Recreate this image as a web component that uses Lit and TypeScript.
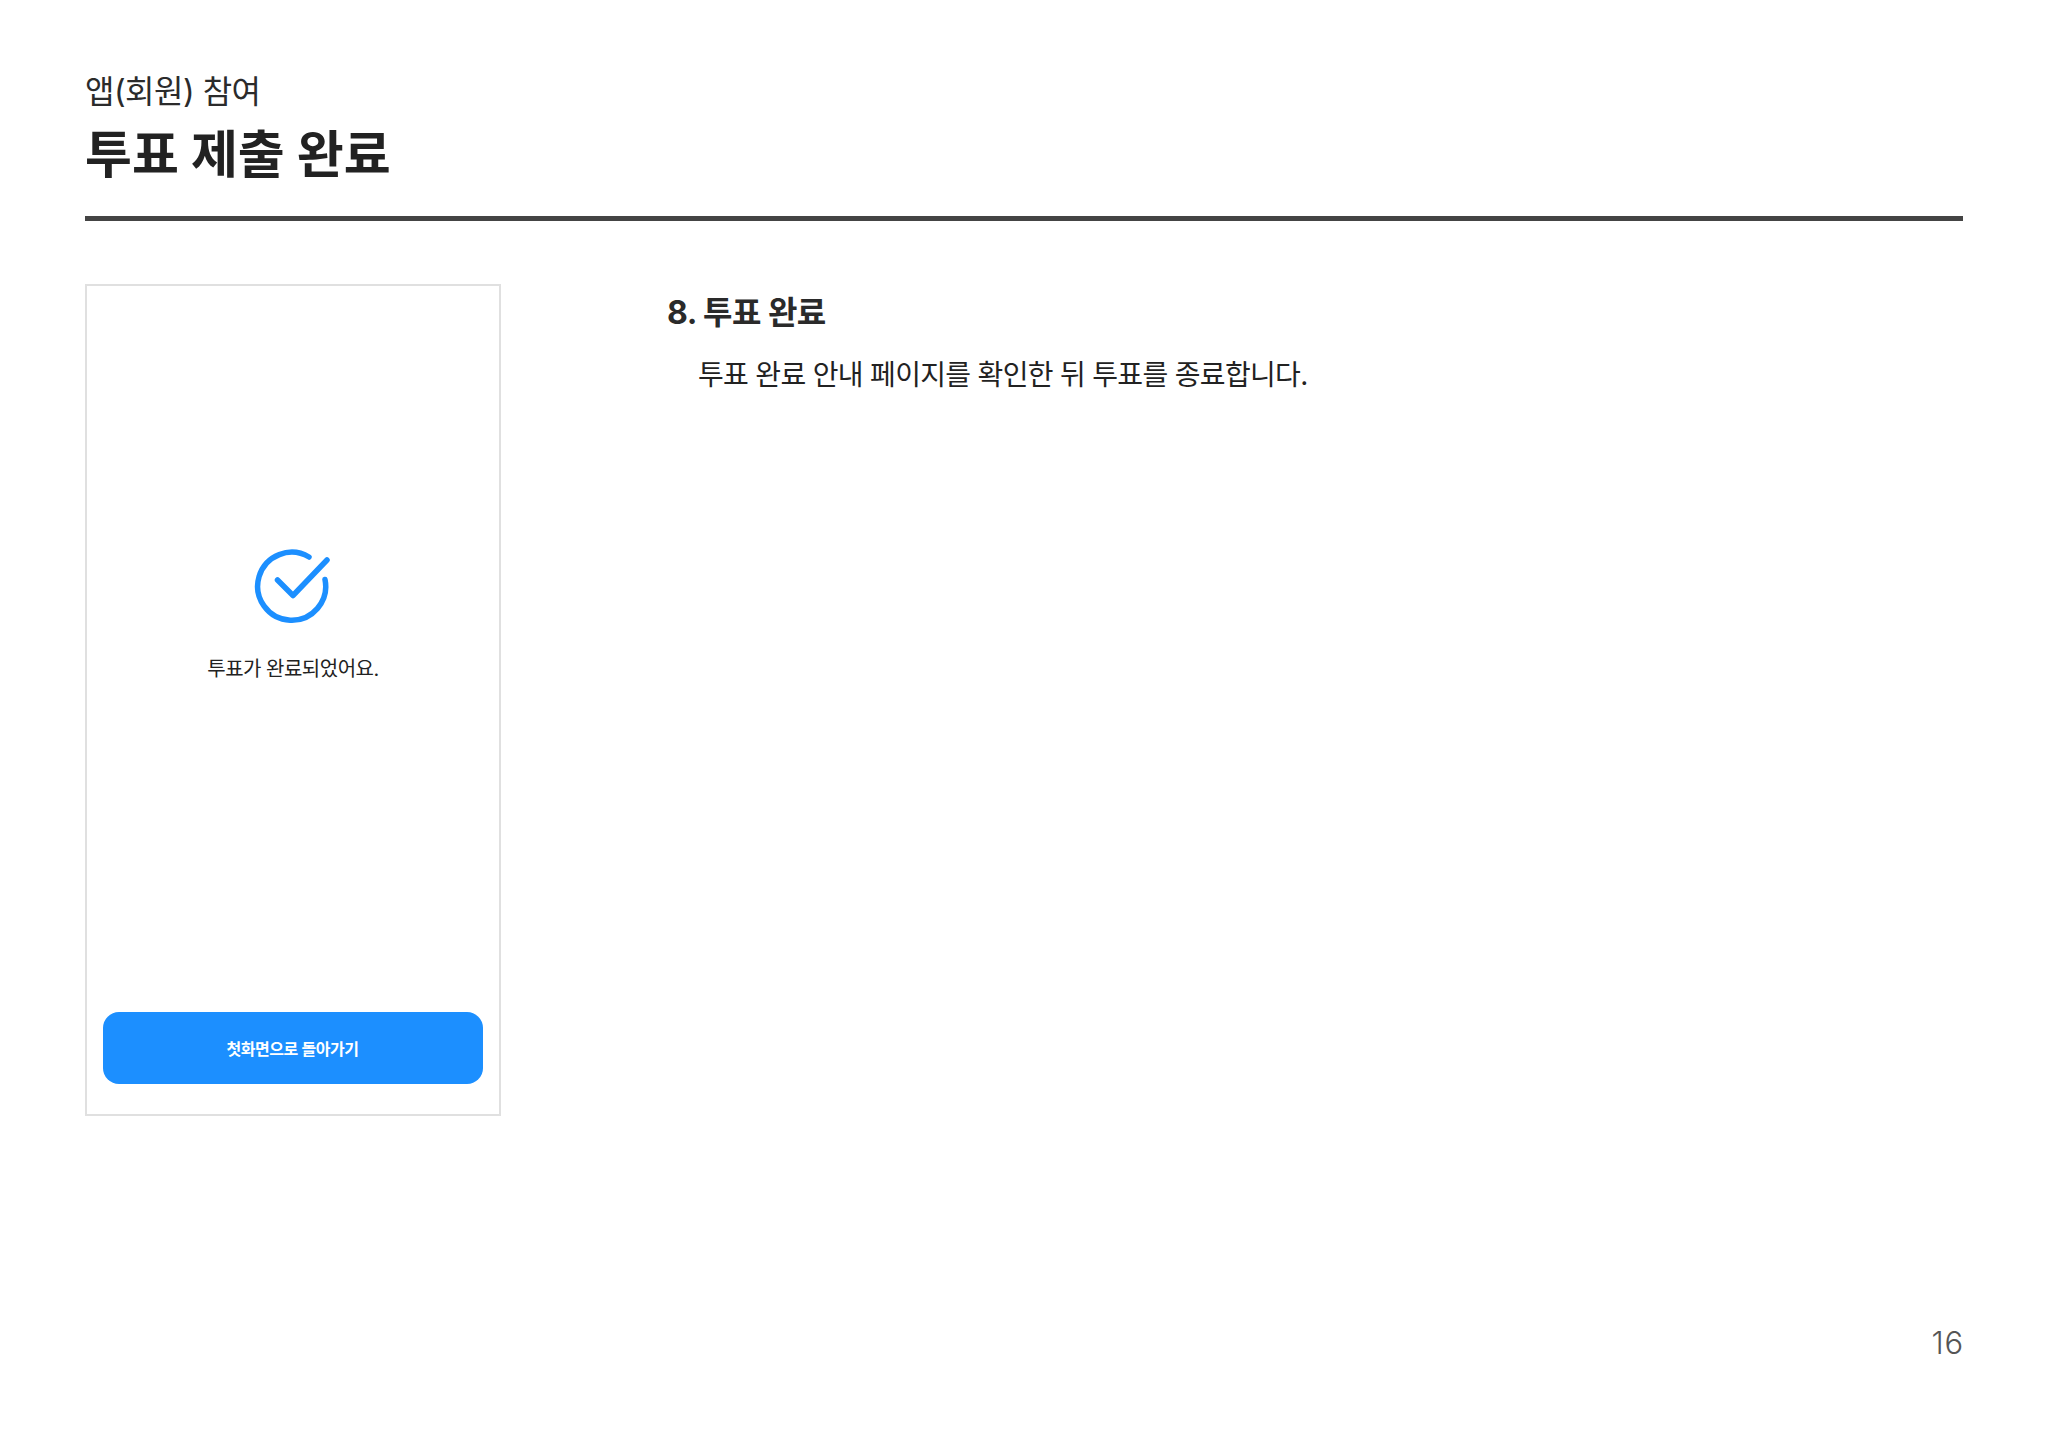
import { LitElement, html, css } from "lit";
import { customElement } from "lit/decorators.js";

@customElement("app-root")
export class AppRoot extends LitElement {
  static styles = css`
    :host {
      display: block;
      width: 2048px;
      height: 1447px;
      background: #fff;
      font-family: Inter, "Noto Sans CJK KR", sans-serif;
      color: #222;
      overflow: hidden;
    }
    .page {
      box-sizing: border-box;
      height: 1447px;
      padding: 71px 85px 0;
      display: flex;
      flex-direction: column;
    }
    .eyebrow {
      font-size: 32px;
      line-height: 42px;
      font-weight: 400;
      letter-spacing: -0.5px;
      color: #2b2b2b;
    }
    h1 {
      margin: 8px 0 0;
      font-size: 51px;
      line-height: 68px;
      font-weight: 700;
      color: #222;
    }
    .rule {
      margin-top: 27px;
      height: 5px;
      background: #444;
    }
    .body {
      margin-top: 63px;
      display: flex;
      align-items: flex-start;
      gap: 166px;
    }
    .phone {
      box-sizing: border-box;
      width: 416px;
      height: 832px;
      border: 2px solid #e0e0e0;
      padding: 0 16px 30px;
      display: flex;
      flex-direction: column;
      align-items: stretch;
    }
    .done {
      flex: 1;
      display: flex;
      flex-direction: column;
      align-items: center;
      padding-top: 262px;
    }
    .check {
      display: block;
      width: 76px;
      height: 76px;
      margin-left: -2px;
    }
    .done p {
      margin: 30px 0 0;
      font-size: 20px;
      line-height: 30px;
      color: #222;
      letter-spacing: -0.5px;
    }
    .btn {
      height: 72px;
      border-radius: 16px;
      background: #1c8fff;
      color: #fff;
      font-size: 16px;
      font-weight: 600;
      display: flex;
      align-items: center;
      justify-content: center;
      letter-spacing: -0.45px;
      padding-right: 1px;
    }
    .desc {
      padding-top: 9px;
    }
    h2 {
      margin: 0;
      font-size: 32px;
      line-height: 40px;
      font-weight: 700;
      letter-spacing: -0.5px;
      color: #2a2a2a;
    }
    .desc p {
      margin: 22px 0 0 31px;
      font-size: 28px;
      line-height: 40px;
      font-weight: 400;
      letter-spacing: -0.68px;
      color: #222;
    }
    .footer {
      margin-top: auto;
      margin-right: -1px;
      padding-bottom: 86px;
      text-align: right;
      font-size: 31px;
      line-height: 36px;
      font-weight: 300;
      letter-spacing: 0.8px;
      color: #555;
    }
  `;

  render() {
    return html`
      <div class="page">
        <div class="eyebrow">앱(회원) 참여</div>
        <h1>투표 제출 완료</h1>
        <div class="rule"></div>
        <div class="body">
          <div class="phone">
            <div class="done">
              <svg class="check" viewBox="0 0 76 76" fill="none" stroke="#1c8fff" stroke-width="5.5" stroke-linecap="round" stroke-linejoin="round">
                <path d="M55 9A34 34 0 1 0 71 31.5" />
                <path d="M23.5 32L39 47.5L73 12" />
              </svg>
              <p>투표가 완료되었어요.</p>
            </div>
            <div class="btn">첫화면으로 돌아가기</div>
          </div>
          <div class="desc">
            <h2>8. 투표 완료</h2>
            <p>투표 완료 안내 페이지를 확인한 뒤 투표를 종료합니다.</p>
          </div>
        </div>
        <div class="footer">16</div>
      </div>
    `;
  }
}
